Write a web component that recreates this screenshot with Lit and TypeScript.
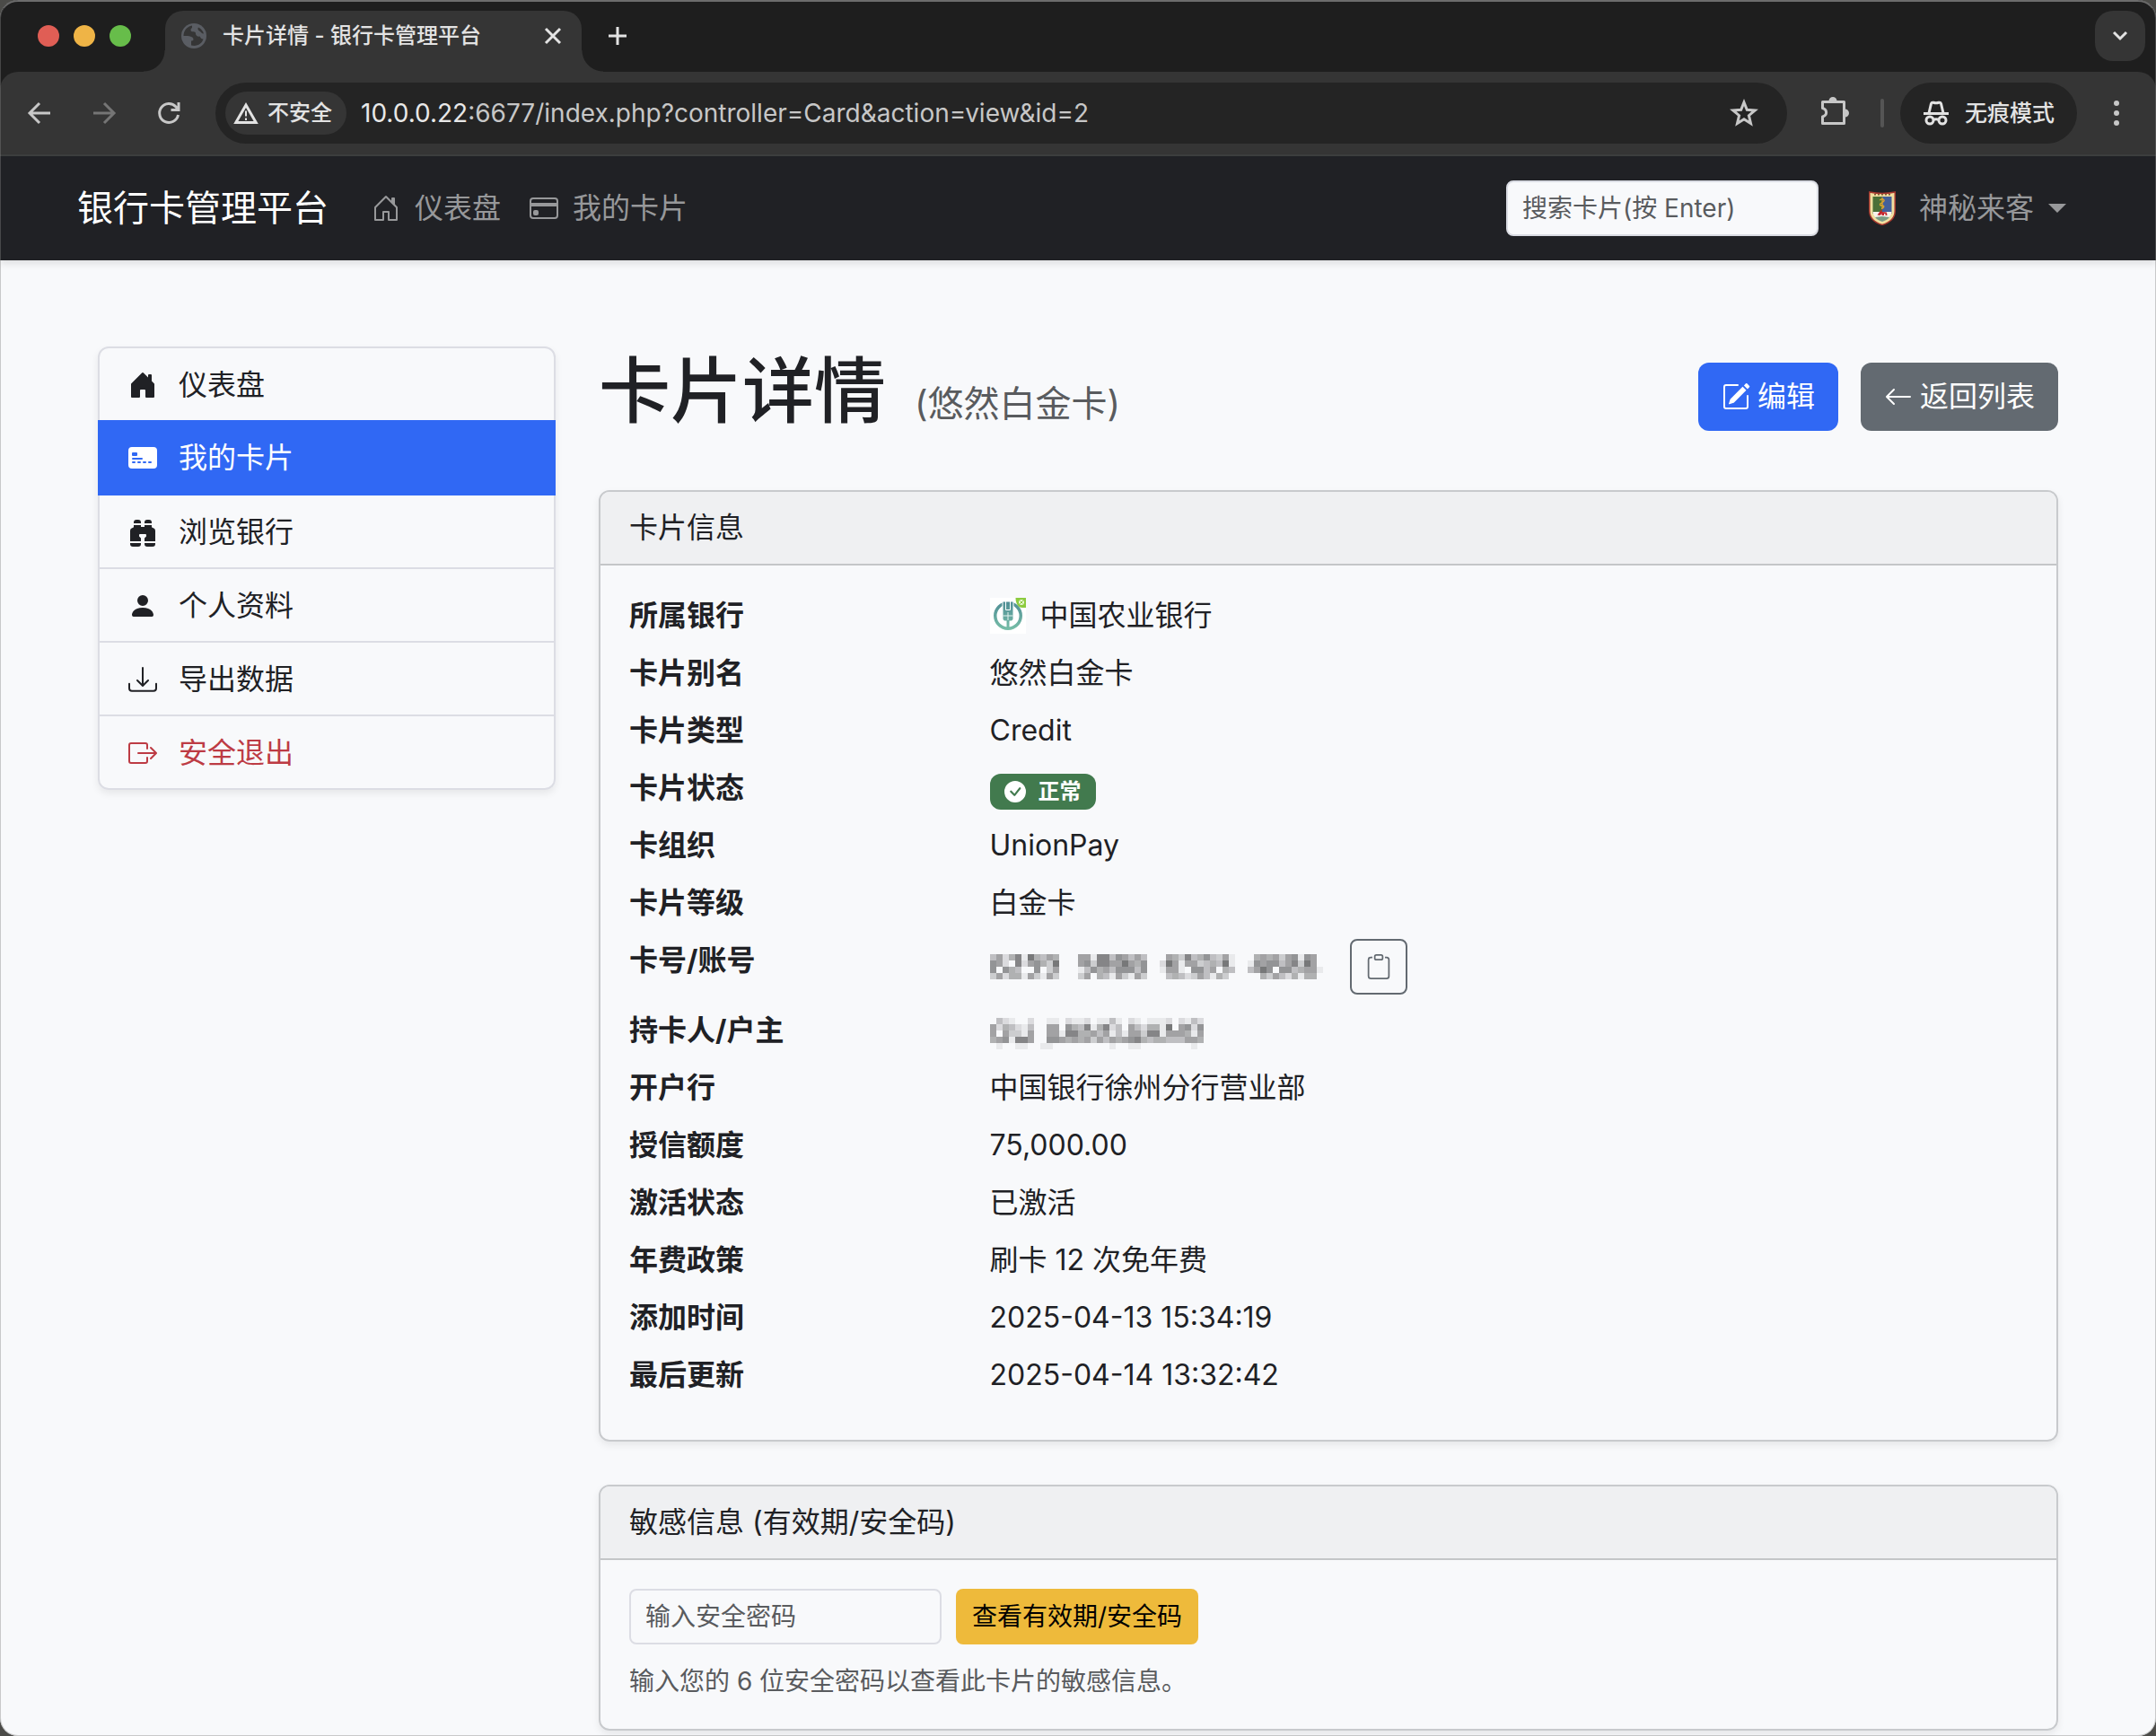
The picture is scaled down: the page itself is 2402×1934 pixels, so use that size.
import { LitElement, html, svg, css, nothing, TemplateResult } from "lit";
import { customElement, property } from "lit/decorators.js";
import { classMap } from "lit/directives/class-map.js";

/* Single-colour glyphs on a 16-unit grid. */
const GLYPHS: Record<string, string[]> = {
  house: [
    "M8.354 1.146a.5.5 0 0 0-.708 0l-6 6A.5.5 0 0 0 1.5 7.5v7a.5.5 0 0 0 .5.5h4.5a.5.5 0 0 0 .5-.5v-4h2v4a.5.5 0 0 0 .5.5H14a.5.5 0 0 0 .5-.5v-7a.5.5 0 0 0-.146-.354L13 5.793V2.5a.5.5 0 0 0-.5-.5h-1a.5.5 0 0 0-.5.5v1.293zM2.5 14V7.707l5.5-5.5 5.5 5.5V14H10v-4a.5.5 0 0 0-.5-.5h-3a.5.5 0 0 0-.5.5v4z",
  ],
  houseFill: [
    "M6.5 14.5v-3.505c0-.245.25-.495.5-.495h2c.25 0 .5.25.5.5v3.5a.5.5 0 0 0 .5.5h4a.5.5 0 0 0 .5-.5v-7a.5.5 0 0 0-.146-.354L13 5.793V2.5a.5.5 0 0 0-.5-.5h-1a.5.5 0 0 0-.5.5v1.293L8.354 1.146a.5.5 0 0 0-.708 0l-6 6A.5.5 0 0 0 1.5 7.5v7a.5.5 0 0 0 .5.5h4a.5.5 0 0 0 .5-.5",
  ],
  card: [
    "M0 4a2 2 0 0 1 2-2h12a2 2 0 0 1 2 2v8a2 2 0 0 1-2 2H2a2 2 0 0 1-2-2zm2-1a1 1 0 0 0-1 1v1h14V4a1 1 0 0 0-1-1zm13 4H1v5a1 1 0 0 0 1 1h12a1 1 0 0 0 1-1z",
    "M2 10a1 1 0 0 1 1-1h1a1 1 0 0 1 1 1v1a1 1 0 0 1-1 1H3a1 1 0 0 1-1-1z",
  ],
  cardFill: [
    "M0 4a2 2 0 0 1 2-2h12a2 2 0 0 1 2 2v8a2 2 0 0 1-2 2H2a2 2 0 0 1-2-2zm2.5 1a.5.5 0 0 0-.5.5v1a.5.5 0 0 0 .5.5h2a.5.5 0 0 0 .5-.5v-1a.5.5 0 0 0-.5-.5zm0 3a.5.5 0 0 0 0 1h5a.5.5 0 0 0 0-1zm0 2a.5.5 0 0 0 0 1h1a.5.5 0 0 0 0-1zm3 0a.5.5 0 0 0 0 1h1a.5.5 0 0 0 0-1zm3 0a.5.5 0 0 0 0 1h1a.5.5 0 0 0 0-1zm3 0a.5.5 0 0 0 0 1h1a.5.5 0 0 0 0-1z",
  ],
  binoculars: [
    "M4.5 1A1.5 1.5 0 0 0 3 2.5V3h4v-.5A1.5 1.5 0 0 0 5.5 1zM7 4v1h2V4h4v.882a.5.5 0 0 0 .276.447l.895.447A1.5 1.5 0 0 1 15 7.118V13H9v-1.5a.5.5 0 0 1 .146-.354l.854-.853V9.5a.5.5 0 0 0-.5-.5h-3a.5.5 0 0 0-.5.5v.793l.854.853A.5.5 0 0 1 7 11.5V13H1V7.118a1.5 1.5 0 0 1 .83-1.342l.894-.447A.5.5 0 0 0 3 4.882V4zM1 14v.5A1.5 1.5 0 0 0 2.5 16h3A1.5 1.5 0 0 0 7 14.5V14zm8 0v.5a1.5 1.5 0 0 0 1.5 1.5h3a1.5 1.5 0 0 0 1.5-1.5V14zm4-11H9v-.5A1.5 1.5 0 0 1 10.5 1h1A1.5 1.5 0 0 1 13 2.5z",
  ],
  person: [
    "M3 14s-1 0-1-1 1-4 6-4 6 3 6 4-1 1-1 1zm5-6a3 3 0 1 0 0-6 3 3 0 0 0 0 6",
  ],
  download: [
    "M.5 9.9a.5.5 0 0 1 .5.5v2.5a1 1 0 0 0 1 1h12a1 1 0 0 0 1-1v-2.5a.5.5 0 0 1 1 0v2.5a2 2 0 0 1-2 2H2a2 2 0 0 1-2-2v-2.5a.5.5 0 0 1 .5-.5",
    "M7.646 11.854a.5.5 0 0 0 .708 0l3-3a.5.5 0 0 0-.708-.708L8.5 10.293V1.5a.5.5 0 0 0-1 0v8.793L5.354 8.146a.5.5 0 1 0-.708.708z",
  ],
  exit: [
    "M10 12.5a.5.5 0 0 1-.5.5h-8a.5.5 0 0 1-.5-.5v-9a.5.5 0 0 1 .5-.5h8a.5.5 0 0 1 .5.5v2a.5.5 0 0 0 1 0v-2A1.5 1.5 0 0 0 9.5 2h-8A1.5 1.5 0 0 0 0 3.5v9A1.5 1.5 0 0 0 1.5 14h8a1.5 1.5 0 0 0 1.5-1.5v-2a.5.5 0 0 0-1 0z",
    "M15.854 8.354a.5.5 0 0 0 0-.708l-3-3a.5.5 0 0 0-.708.708L14.293 7.5H5.5a.5.5 0 0 0 0 1h8.793l-2.147 2.146a.5.5 0 0 0 .708.708z",
  ],
  pencil: [
    "M15.502 1.94a.5.5 0 0 1 0 .706L14.459 3.69l-2-2L13.502.646a.5.5 0 0 1 .707 0l1.293 1.293zm-1.75 2.456-2-2L4.939 9.21a.5.5 0 0 0-.121.196l-.805 2.414a.25.25 0 0 0 .316.316l2.414-.805a.5.5 0 0 0 .196-.12l6.813-6.814z",
    "M1 13.5A1.5 1.5 0 0 0 2.5 15h11a1.5 1.5 0 0 0 1.5-1.5v-6a.5.5 0 0 0-1 0v6a.5.5 0 0 1-.5.5h-11a.5.5 0 0 1-.5-.5v-11a.5.5 0 0 1 .5-.5H9a.5.5 0 0 0 0-1H2.5A1.5 1.5 0 0 0 1 2.5z",
  ],
  arrowLeft: [
    "M15 8a.5.5 0 0 0-.5-.5H2.707l3.147-3.146a.5.5 0 1 0-.708-.708l-4 4a.5.5 0 0 0 0 .708l4 4a.5.5 0 0 0 .708-.708L2.707 8.5H14.5A.5.5 0 0 0 15 8",
  ],
  clipboard: [
    "M4 1.5H3a2 2 0 0 0-2 2V14a2 2 0 0 0 2 2h10a2 2 0 0 0 2-2V3.5a2 2 0 0 0-2-2h-1v1h1a1 1 0 0 1 1 1V14a1 1 0 0 1-1 1H3a1 1 0 0 1-1-1V3.5a1 1 0 0 1 1-1h1z",
    "M9.5 1a.5.5 0 0 1 .5.5v1a.5.5 0 0 1-.5.5h-3a.5.5 0 0 1-.5-.5v-1a.5.5 0 0 1 .5-.5zm-3-1A1.5 1.5 0 0 0 5 1.5v1A1.5 1.5 0 0 0 6.5 4h3A1.5 1.5 0 0 0 11 2.5v-1A1.5 1.5 0 0 0 9.5 0z",
  ],
  check: [
    "M16 8A8 8 0 1 1 0 8a8 8 0 0 1 16 0m-3.97-3.03a.75.75 0 0 0-1.08.022L7.477 9.417 5.384 7.323a.75.75 0 0 0-1.06 1.06L6.97 11.03a.75.75 0 0 0 1.079-.02l3.992-4.99a.75.75 0 0 0-.01-1.05z",
  ],
};

const glyph = (name: string, size = 32) => html`
  <svg width=${size} height=${size} viewBox="0 0 16 16" fill="currentColor" aria-hidden="true">
    ${GLYPHS[name].map((d) => svg`<path fill-rule="evenodd" d=${d}></path>`)}
  </svg>
`;

const line = (size: number, width: number, body: TemplateResult) => html`
  <svg width=${size} height=${size} viewBox="0 0 ${size} ${size}" fill="none" stroke="currentColor"
    stroke-width=${width} aria-hidden="true">${body}</svg>
`;

const base = css`
  * { box-sizing: border-box; }
  svg { display: block; flex: none; }
  button, input {
    font: inherit;
    color: inherit;
    margin: 0;
    padding: 0;
    border: 0;
    background: none;
  }
  a { color: inherit; text-decoration: none; }
`;

/* Masks a private value with a grid of grey cells; each digit is a cell's darkness. */
@customElement("masked-value")
class MaskedValue extends LitElement {
  @property({ attribute: false }) rows: string[] = [];
  @property() label = "";
  static styles = css`
    :host { display: block; }
    svg { display: block; }
  `;
  render() {
    const cell = 7;
    const w = this.rows[0].length * cell;
    const h = this.rows.length * cell;
    return html`
      <svg width=${w} height=${h} viewBox="0 0 ${w} ${h}" role="img" aria-label=${this.label}
        shape-rendering="crispEdges">
        ${this.rows.map((row, y) =>
          [...row].map((c, x) =>
            c === "0"
              ? nothing
              : svg`<rect x=${x * cell} y=${y * cell} width=${cell} height=${cell}
                  fill="#1b1b1d" fill-opacity=${Number(c) * 0.065}></rect>`
          )
        )}
      </svg>
    `;
  }
}

const NUMBER_MASK = [
  "46258195465" + "000" + "66188476464" + "00" + "065384574361" + "00" + "056563671760",
  "76208267539" + "000" + "67388669657" + "00" + "296166345491" + "00" + "176774683960",
  "70754007036" + "000" + "14756477747" + "00" + "166107746054" + "00" + "469707745661",
  "36255163163" + "000" + "36054163163" + "00" + "045423641530" + "00" + "005364251550",
];
const HOLDER_MASK = [
  "0000000000000000000000000000000000",
  "0421002001102112011410210111202142",
  "6254214006607548158240642551906727",
  "6063316006618855646141663881666516",
  "5671886007765656364656785455444665",
  "0100110011000000000100110000000010",
];

@customElement("browser-chrome")
class BrowserChrome extends LitElement {
  static styles = [
    base,
    css`
      :host {
        display: block;
        background: #1e1e1e;
        color: #e3e3e3;
        font-size: 24px;
      }
      .strip {
        height: 80px;
        display: flex;
        align-items: flex-end;
        padding: 0 12px 0 42px;
      }
      .lights { display: flex; gap: 16px; align-self: center; margin-right: 38px; }
      .light { width: 24px; height: 24px; border-radius: 50%; }
      .red { background: #e05e55; }
      .yellow { background: #efb446; }
      .green { background: #67bd4a; }
      .tab {
        position: relative;
        width: 464px;
        height: 68px;
        padding: 0 20px 12px 18px;
        border-radius: 20px 20px 0 0;
        background: #353535;
        display: flex;
        align-items: center;
      }
      .tab::before, .tab::after {
        content: "";
        position: absolute;
        bottom: 0;
        width: 24px;
        height: 24px;
      }
      .tab::before { right: 100%; background: radial-gradient(circle at 0 0, #1e1e1e 23px, #353535 24px); }
      .tab::after { left: 100%; background: radial-gradient(circle at 100% 0, #1e1e1e 23px, #353535 24px); }
      .title { flex: 1; margin-left: 18px; white-space: nowrap; font-weight: 500; }
      .plain { display: grid; place-items: center; }
      .new { margin: 0 auto 28px 28px; }
      .list {
        width: 56px;
        height: 56px;
        border-radius: 20px;
        background: #353535;
        align-self: center;
      }
      .bar {
        display: flex;
        align-items: center;
        height: 94px;
        padding: 0 40px 0 28px;
        background: #353535;
        border-bottom: 2px solid #3d3f3f;
        border-radius: 20px 20px 0 0;
        color: #c7c7c7;
      }
      .nav { display: flex; gap: 40px; margin-right: 36px; }
      .off { color: #757575; }
      .address {
        flex: 1;
        display: flex;
        align-items: center;
        height: 68px;
        padding: 0 32px 0 11px;
        border-radius: 34px;
        background: #242424;
      }
      .chip {
        display: flex;
        align-items: center;
        gap: 10px;
        height: 48px;
        padding: 0 16px 0 9px;
        border-radius: 24px;
        background: #353535;
        color: #e3e3e3;
        font-weight: 500;
      }
      .url { flex: 1; margin-left: 16px; font-size: 28px; white-space: nowrap; }
      .host { color: #e8e8e8; }
      .ext { margin: 0 34px 4px 36px; }
      .rule { width: 4px; height: 32px; border-radius: 2px; background: #555; margin-right: 18px; }
      .mode {
        display: flex;
        align-items: center;
        gap: 17px;
        height: 68px;
        padding: 0 25px;
        margin-right: 40px;
        border-radius: 34px;
        background: #242424;
        color: #e3e3e3;
        font-size: 25px;
        font-weight: 500;
      }
    `,
  ];
  render() {
    return html`
      <div class="strip">
        <div class="lights">
          <span class="light red"></span><span class="light yellow"></span><span class="light green"></span>
        </div>
        <div class="tab">
          <svg width="28" height="28" viewBox="0 0 28 28" aria-hidden="true">
            <circle cx="14" cy="14" r="14" fill="#5a5d63"></circle>
            <path fill="#353535" d="M12 2.5C6 3.5 2.500 8.500 2.500 14c3.500 0 6 0 8 .8 1.500.6 3 1.200 3 3.200 0 1.500-1.500 1.500-2.500 1.500v5c6.500 1.800 12-2 13.500-7-2.500.2-3-1.500-4-3-2 .5-4.500-.5-4.500-3s-2-2-4-2.200c-2-.3-2-3.300 0-4.300z"></path>
            <path fill="#353535" d="M19 4.500c-1.500 2 .5 4 2 4.500 1 .6 1.500 2.500 4 2.500-.8-3-3-5.500-6-7z"></path>
          </svg>
          <span class="title">卡片详情 - 银行卡管理平台</span>
          <button class="plain" aria-label="关闭标签页">
            ${line(24, 3, svg`<path d="M4 4l16 16M20 4L4 20"></path>` as TemplateResult)}
          </button>
        </div>
        <button class="plain new" aria-label="新标签页">
          ${line(24, 3, svg`<path d="M12 2v20M2 12h20"></path>` as TemplateResult)}
        </button>
        <button class="plain list" aria-label="搜索标签页">
          ${line(24, 3, svg`<path d="M5 8l7 7 7-7"></path>` as TemplateResult)}
        </button>
      </div>
      <div class="bar">
        <div class="nav">
          <button class="plain" aria-label="后退">
            ${line(32, 3, svg`<path d="M28 16H6M16 5L5 16l11 11"></path>` as TemplateResult)}
          </button>
          <button class="plain off" aria-label="前进">
            ${line(32, 3, svg`<path d="M4 16h22M16 5l11 11-11 11"></path>` as TemplateResult)}
          </button>
          <button class="plain" aria-label="重新加载">
            ${line(32, 3, svg`<path d="M26.500 18a10.500 10.500 0 1 1-2.500-9l2.500 3M27 4v8.500h-8.500"></path>` as TemplateResult)}
          </button>
        </div>
        <div class="address">
          <button class="chip">
            <svg width="28" height="24" viewBox="0 0 28 24" fill="none" stroke="currentColor" stroke-width="3" aria-hidden="true">
              <path d="M14 3L2.800 22.500h22.400z"></path>
              <path d="M14 9.500v6M14 17.500v2.500" stroke-width="2"></path>
            </svg>
            不安全
          </button>
          <span class="url"><span class="host">10.0.0.22</span>:6677/index.php?controller=Card&amp;action=view&amp;id=2</span>
          <button class="plain" aria-label="为此标签页添加书签">
            ${line(32, 3, svg`<path d="M16 4l3.300 8.300 8.900.6-6.800 5.800 2.100 8.800-7.500-4.800-7.500 4.800 2.100-8.800-6.800-5.800 8.900-.6z"></path>` as TemplateResult)}
          </button>
        </div>
        <button class="plain ext" aria-label="扩展程序">
          <svg width="34" height="34" viewBox="0 0 34 34" aria-hidden="true">
            <path fill="none" stroke="currentColor" stroke-width="3" stroke-linejoin="round"
              d="M3.500 6.500h24v24h-24v-7.500c5.500-1.500 5.500-8 0-9.500z"></path>
            <path fill="currentColor" d="M10.500 5.500a4.500 4.500 0 0 1 9 0zM28.500 14.500a4.500 4.500 0 0 1 0 9z"></path>
          </svg>
        </button>
        <span class="rule"></span>
        <button class="mode">
          <svg width="30" height="28" viewBox="0 0 30 28" fill="none" stroke="currentColor" stroke-width="3" aria-hidden="true">
            <path d="M1 14.500h28"></path>
            <path d="M7 14L9.500 3.500c.5-1.500 1.500-1.500 2.500-1.200 2 .6 4 .6 6 0 1-.3 2-.3 2.500 1.200L23 14"></path>
            <circle cx="8" cy="22" r="4"></circle>
            <circle cx="22" cy="22" r="4"></circle>
            <path d="M12 21.500c2-1 4-1 6 0"></path>
          </svg>
          无痕模式
        </button>
        <button class="plain" aria-label="菜单">
          <svg width="8" height="32" viewBox="0 0 8 32" fill="currentColor" aria-hidden="true">
            <circle cx="4" cy="5" r="3"></circle><circle cx="4" cy="16" r="3"></circle><circle cx="4" cy="27" r="3"></circle>
          </svg>
        </button>
      </div>
    `;
  }
}

@customElement("site-nav")
class SiteNav extends LitElement {
  static styles = [
    base,
    css`
      :host { display: block; position: relative; box-shadow: 0 4px 8px rgba(0, 0, 0, 0.1); }
      .bar {
        display: flex;
        align-items: center;
        height: 116px;
        padding: 0 100px 0 86px;
        background: #202125;
        color: #97989a;
      }
      .brand { color: #fff; font-size: 40px; margin-right: 48px; white-space: nowrap; }
      .links { display: flex; gap: 32px; flex: 1; }
      .link, .user { display: flex; align-items: center; gap: 16px; white-space: nowrap; }
      .search {
        width: 348px;
        height: 62px;
        padding: 0 16px;
        border: 2px solid #dadce3;
        border-radius: 8px;
        background: #f8f9fb;
        color: #202125;
        font-size: 28px;
        margin-right: 56px;
      }
      .search::placeholder { color: #595b5e; opacity: 1; }
      .name { margin-left: 10px; }
      .caret {
        border: solid transparent;
        border-width: 10px 10px 0;
        border-top-color: currentColor;
      }
    `,
  ];
  render() {
    return html`
      <nav class="bar">
        <a class="brand" href="#home">银行卡管理平台</a>
        <div class="links">
          <a class="link" href="#dashboard">${glyph("house")}仪表盘</a>
          <a class="link" href="#cards">${glyph("card")}我的卡片</a>
        </div>
        <input class="search" type="search" aria-label="搜索卡片" placeholder="搜索卡片(按 Enter)" />
        <button class="user">
          <svg width="30" height="38" viewBox="0 0 30 38" aria-hidden="true">
            <path d="M.8 1c9.500 2 19 2 28.400 0v21c0 8-6 13-14.200 15.500C6.800 35 .8 30 .8 22z" fill="#f1dfa0" stroke="#a8392f" stroke-width="1.500"></path>
            <path d="M4.500 6h10.500v19H4.500z" fill="#4b7038"></path>
            <path d="M15 6h10.500v19H15z" fill="#44609a"></path>
            <path d="M6 3.800h18" stroke="#7d5a34" stroke-width="1.500" stroke-dasharray="2 2"></path>
            <path d="M4.500 23h21c-.4 5-5 8.500-10.500 11-5.500-2.500-10.100-6-10.500-11z" fill="#f6f3ec"></path>
            <path d="M7 29l8-1 8 1c-2 2.500-4.500 3.600-8 5-3.500-1.400-6-2.500-8-5z" fill="#7c9c84"></path>
            <path d="M15 7v13M12 10c5-2.500 7 .5 3 2.500s-3 3.500 0 3.500 2 3-1 3.500" fill="none" stroke="#dfa52c" stroke-width="1.300"></path>
            <path d="M9.500 26.500l3-4 2-2.500v3l5.500.5.500 3.500h-2v-2h-1.500v2h-2.500v-2l-2 2z" fill="#c4242c"></path>
          </svg>
          <span class="name">神秘来客</span>
          <span class="caret"></span>
        </button>
      </nav>
    `;
  }
}

const MENU = [
  { icon: "houseFill", text: "仪表盘", href: "#dashboard" },
  { icon: "cardFill", text: "我的卡片", href: "#cards", active: true },
  { icon: "binoculars", text: "浏览银行", href: "#banks" },
  { icon: "person", text: "个人资料", href: "#profile" },
  { icon: "download", text: "导出数据", href: "#export" },
  { icon: "exit", text: "安全退出", href: "#logout", danger: true },
];

@customElement("side-menu")
class SideMenu extends LitElement {
  static styles = [
    base,
    css`
      :host { display: block; }
      .menu {
        display: flex;
        flex-direction: column;
        border-radius: 12px;
        box-shadow: 0 4px 8px rgba(0, 0, 0, 0.075);
      }
      .item {
        display: flex;
        align-items: center;
        gap: 24px;
        height: 82px;
        padding: 2px 32px 0;
        border: solid #dcdde4;
        border-width: 0 2px 2px;
      }
      .item:first-child { height: 84px; border-top-width: 2px; border-radius: 12px 12px 0 0; }
      .item:last-child { border-radius: 0 0 12px 12px; }
      .active {
        background: #3068f4;
        border-color: #3068f4;
        color: #fff;
        height: 84px;
        margin-top: -2px;
      }
      .danger { color: #bd3b44; }
    `,
  ];
  render() {
    return html`
      <nav class="menu">
        ${MENU.map(
          (m) => html`<a href=${m.href} class=${classMap({ item: true, active: !!m.active, danger: !!m.danger })}
            >${glyph(m.icon)}${m.text}</a>`
        )}
      </nav>
    `;
  }
}

@customElement("info-card")
class InfoCard extends LitElement {
  @property() heading = "";
  static styles = [
    base,
    css`
      :host { display: block; }
      .card {
        border: 2px solid #c8cacd;
        border-radius: 12px;
        box-shadow: 0 4px 8px rgba(0, 0, 0, 0.075);
        overflow: hidden;
      }
      .head {
        margin: 0;
        padding: 16px 32px;
        line-height: 48px;
        font-size: 32px;
        font-weight: 400;
        background: #eff0f2;
        border-bottom: 2px solid #c4c6c8;
      }
      .body { padding: 32px; }
    `,
  ];
  render() {
    return html`
      <section class="card">
        <h2 class="head">${this.heading}</h2>
        <div class="body"><slot></slot></div>
      </section>
    `;
  }
}

const bankLogo = html`
  <svg width="40" height="40" viewBox="0 0 40 40" aria-hidden="true">
    <defs>
      <linearGradient id="bank" gradientUnits="userSpaceOnUse" x1="0" y1="4" x2="0" y2="36">
        <stop offset="0" stop-color="#4f8d95"></stop>
        <stop offset="1" stop-color="#78bfa8"></stop>
      </linearGradient>
    </defs>
    <path fill="#fff" d="M0 0h40v40H0z"></path>
    <path fill="url(#bank)" fill-rule="evenodd" d="M20 4a16 16 0 1 0 0 32 16 16 0 0 0 0-32zm0 3.500a12.500 12.500 0 1 1 0 25 12.500 12.500 0 0 1 0-25z"></path>
    <path fill="#fff" d="M13.500 3h13v10h-13z"></path>
    <path fill="url(#bank)" d="M14.500 4.500h11V24l-1.500 1.500h-2.500V33h-3v-7.500H16L14.500 24z"></path>
    <path fill="none" stroke="#fff" d="M17.500 3v10.500h5V3"></path>
    <path stroke="#e4f2ef" d="M14.500 20h11M20 16v9" fill="none"></path>
    <path fill="#8ccb3f" d="M28.500 0H40v11h-4c-5 0-7.500-5-7.500-11z"></path>
    <circle cx="35" cy="5" r="3" fill="#e9f7d6"></circle>
    <path stroke="#8ccb3f" d="M32 8l6-6M33.500 3.500l3 3" fill="none"></path>
  </svg>
`;

@customElement("app-root")
class AppRoot extends LitElement {
  static styles = [
    base,
    css`
      :host {
        display: block;
        min-height: 100vh;
        background: #4b4b48;
        color: #202125;
        font-family: Inter, "Noto Sans CJK SC", sans-serif;
        font-size: 32px;
        line-height: 48px;
      }
      .window {
        position: relative;
        min-height: 100vh;
        border-radius: 20px;
        overflow: hidden;
        background: #f8f9fb;
      }
      .window::after {
        content: "";
        position: absolute;
        inset: 0;
        border: 1px solid rgba(130, 130, 130, 0.4);
        border-top: 2px solid #6c6c6c;
        border-radius: 20px;
        pointer-events: none;
      }
      .page {
        display: grid;
        grid-template-columns: repeat(4, minmax(0, 1fr));
        align-items: start;
        gap: 48px;
        padding: 96px 109px 4px;
      }
      .main { grid-column: span 3; display: grid; gap: 48px; }
      .top {
        display: flex;
        align-items: center;
        gap: 25px;
        height: 112px;
      }
      .title {
        flex: 1;
        margin: 0;
        font-size: 80px;
        line-height: 96px;
        font-weight: 500;
      }
      .alias { margin-left: 32px; font-size: 40px; font-weight: 400; color: #595b5e; }
      .btn {
        display: flex;
        align-items: center;
        gap: 8px;
        height: 76px;
        padding: 0 26px;
        border-radius: 12px;
        color: #fff;
        white-space: nowrap;
      }
      .primary { background: #3068f4; }
      .secondary { background: #636a71; }
      .facts {
        display: grid;
        grid-template-columns: minmax(0, 1fr) minmax(0, 3fr);
        column-gap: 16px;
        margin: 0;
      }
      .key { font-weight: 700; margin-bottom: 16px; }
      .val {
        display: flex;
        align-items: center;
        gap: 16px;
        min-height: 48px;
        margin: 0 0 16px;
      }
      .low { align-items: flex-end; }
      .wide { gap: 30px; }
      .badge {
        display: flex;
        align-items: center;
        gap: 14px;
        padding: 8px 16px;
        border-radius: 12px;
        background: #427a4e;
        color: #fff;
        font-size: 24px;
        line-height: 24px;
        font-weight: 700;
      }
      .copy {
        padding: 15px 16px;
        border: 2px solid #636a71;
        border-radius: 8px;
        color: #636a71;
      }
      .form { display: flex; gap: 16px; font-size: 28px; }
      .pin {
        width: 348px;
        height: 62px;
        padding: 0 16px;
        border: 2px solid #dcdde4;
        border-radius: 8px;
      }
      .pin::placeholder { color: #595b5e; opacity: 1; }
      .reveal {
        height: 62px;
        padding: 0 18px;
        border-radius: 8px;
        background: #eeba3b;
        color: #000;
      }
      .help { margin: 20px 0 0; font-size: 28px; line-height: 42px; color: #595b5e; }
    `,
  ];

  private facts: { key: string; value: unknown; cls?: string }[] = [
    { key: "所属银行", value: html`${bankLogo}中国农业银行` },
    { key: "卡片别名", value: "悠然白金卡" },
    { key: "卡片类型", value: "Credit" },
    { key: "卡片状态", value: html`<span class="badge">${glyph("check", 24)}正常</span>`, cls: "low" },
    { key: "卡组织", value: "UnionPay" },
    { key: "卡片等级", value: "白金卡" },
    {
      key: "卡号/账号",
      value: html`<masked-value .rows=${NUMBER_MASK} label="卡号"></masked-value>
        <button class="copy" aria-label="复制">${glyph("clipboard", 28)}</button>`,
      cls: "wide",
    },
    { key: "持卡人/户主", value: html`<masked-value .rows=${HOLDER_MASK} label="持卡人"></masked-value>` },
    { key: "开户行", value: "中国银行徐州分行营业部" },
    { key: "授信额度", value: "75,000.00" },
    { key: "激活状态", value: "已激活" },
    { key: "年费政策", value: "刷卡 12 次免年费" },
    { key: "添加时间", value: "2025-04-13 15:34:19" },
    { key: "最后更新", value: "2025-04-14 13:32:42" },
  ];

  render() {
    return html`
      <div class="window" lang="zh-CN">
        <browser-chrome></browser-chrome>
        <site-nav></site-nav>
        <div class="page">
          <side-menu></side-menu>
          <main class="main">
            <header class="top">
              <h1 class="title">卡片详情<small class="alias">(悠然白金卡)</small></h1>
              <a class="btn primary" href="#edit">${glyph("pencil")}编辑</a>
              <a class="btn secondary" href="#cards">${glyph("arrowLeft")}返回列表</a>
            </header>
            <info-card heading="卡片信息">
              <dl class="facts">
                ${this.facts.map(
                  (f) => html`<dt class="key">${f.key}</dt>
                    <dd class="val ${f.cls ?? ""}">${f.value}</dd>`
                )}
              </dl>
            </info-card>
            <info-card heading="敏感信息 (有效期/安全码)">
              <form class="form" @submit=${(e: Event) => e.preventDefault()}>
                <input class="pin" type="password" aria-label="安全密码" placeholder="输入安全密码" />
                <button class="reveal">查看有效期/安全码</button>
              </form>
              <p class="help">输入您的 6 位安全密码以查看此卡片的敏感信息。</p>
            </info-card>
          </main>
        </div>
      </div>
    `;
  }
}
